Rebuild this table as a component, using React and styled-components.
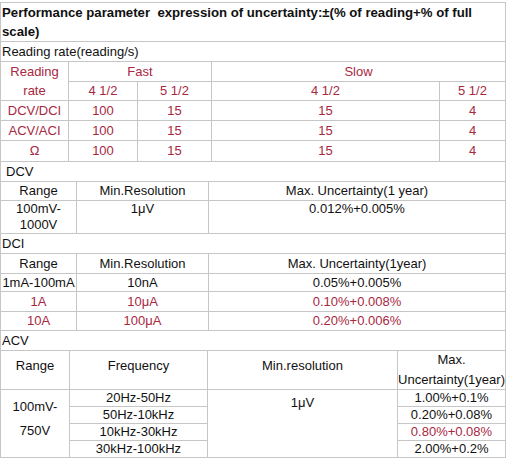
import React from 'react'
import styled, { createGlobalStyle } from 'styled-components'

const GlobalStyle = createGlobalStyle`
    body {
        margin: 0;
        background: #fff;
        font-family: "Liberation Sans", Arial, sans-serif;
        font-size: 13px;
        color: #111;
    }
`

const LINE = '#c6c6c6'
const RED = '#a8283f'

const rates = [
    ['DCV/DCI', '100', '15', '15', '4'],
    ['ACV/ACI', '100', '15', '15', '4'],
    ['Ω', '100', '15', '15', '4'],
]

const dci = [
    { range: '1mA-100mA', res: '10nA', unc: '0.05%+0.005%', red: false, h: 17 },
    { range: '1A', res: '10μA', unc: '0.10%+0.008%', red: true, h: 19 },
    { range: '10A', res: '100μA', unc: '0.20%+0.006%', red: true, h: 18 },
]

const acv = [
    ['20Hz-50Hz', '1.00%+0.1%', false],
    ['50Hz-10kHz', '0.20%+0.08%', false],
    ['10kHz-30kHz', '0.80%+0.08%', true],
    ['30kHz-100kHz', '2.00%+0.2%', false],
]

const App = () => {
    return (
        <>
            <GlobalStyle />
            <Page>
                <Sheet>
                    <Caption>
                        Performance parameter&nbsp; expression of uncertainty:±(% of reading+% of full<br />scale)
                    </Caption>
                    <Label>Reading rate(reading/s)</Label>
                    <Grid $cols="67px 68px 73px 227px 65px" $rows="19px 18px 19px 19px 20px">
                        <Cell $red $span="1 / 3" $lh={19}>Reading<br />rate</Cell>
                        <Cell $red $col="2 / 4">Fast</Cell>
                        <Cell $red $col="4 / 6">Slow</Cell>
                        <Cell $red>4 1/2</Cell>
                        <Cell $red>5 1/2</Cell>
                        <Cell $red>4 1/2</Cell>
                        <Cell $red>5 1/2</Cell>
                        {rates.map(r => r.map((v, i) => <Cell $red key={r[0] + i}>{v}</Cell>))}
                    </Grid>

                    <Label $pad={5}>DCV</Label>
                    <Grid $cols="75px 131px 296px" $rows="18px 32px">
                        <Cell>Range</Cell>
                        <Cell>Min.Resolution</Cell>
                        <Cell>Max. Uncertainty(1 year)</Cell>
                        <Cell $top $lh={16}>100mV-<br />1000V</Cell>
                        <Cell $top $lh={16}>1μV</Cell>
                        <Cell $top $lh={16}>0.012%+0.005%</Cell>
                    </Grid>

                    <Label>DCI</Label>
                    <Grid $cols="75px 131px 296px" $rows={'19px ' + dci.map(d => d.h + 'px').join(' ')}>
                        <Cell>Range</Cell>
                        <Cell>Min.Resolution</Cell>
                        <Cell>Max. Uncertainty(1year)</Cell>
                        {dci.map(d => (
                            <React.Fragment key={d.range}>
                                <Cell $red={d.red}>{d.range}</Cell>
                                <Cell $red={d.red}>{d.res}</Cell>
                                <Cell $red={d.red}>{d.unc}</Cell>
                            </React.Fragment>
                        ))}
                    </Grid>

                    <Label>ACV</Label>
                    <Grid $cols="68px 137px 189px 107px" $rows="38px 16px 16px 16px 16px">
                        <HeadCell>Range</HeadCell>
                        <HeadCell>Frequency</HeadCell>
                        <HeadCell>Min.resolution</HeadCell>
                        <Cell $lh={20}>Max.<br />Uncertainty(1year)</Cell>
                        <Cell $span="2 / 6" $lh={24} $padB={10}>100mV-<br />750V</Cell>
                        <Cell>{acv[0][0]}</Cell>
                        <Cell $span="2 / 6" $col="3" $top $padT={5}>1μV</Cell>
                        <Cell $col="4">{acv[0][1]}</Cell>
                        {acv.slice(1).map(([f, u, red]) => (
                            <React.Fragment key={f}>
                                <Cell $col="2">{f}</Cell>
                                <Cell $col="4" $red={red}>{u}</Cell>
                            </React.Fragment>
                        ))}
                    </Grid>
                </Sheet>
            </Page>
        </>
    )
}

export default App;

const Page = styled.div`
    padding-top: 2px;
`

const Sheet = styled.div`
    box-sizing: border-box;
    width: 506px;
    display: flex;
    flex-direction: column;
    gap: 1px;
    background: ${LINE};
    border: 1px solid ${LINE};
`

const Caption = styled.div`
    background: #fff;
    height: 38px;
    padding: 0 1px;
    font-weight: bold;
    font-size: 13.2px;
    line-height: 19px;
    color: #111;
`

const Label = styled.div`
    background: #fff;
    height: 19px;
    line-height: 19px;
    padding-left: ${p => p.$pad || 1}px;
`

const Grid = styled.div`
    display: grid;
    gap: 1px;
    grid-template-columns: ${p => p.$cols};
    grid-template-rows: ${p => p.$rows};
`

const Cell = styled.div`
    background: #fff;
    display: flex;
    align-items: ${p => (p.$top ? 'flex-start' : 'center')};
    justify-content: center;
    text-align: center;
    white-space: nowrap;
    line-height: ${p => p.$lh || 16}px;
    padding-top: ${p => p.$padT || 0}px;
    padding-bottom: ${p => p.$padB || 0}px;
    color: ${p => (p.$red ? RED : '#111')};
    ${p => p.$span && `grid-row: ${p.$span};`}
    ${p => p.$col && `grid-column: ${p.$col};`}
`

const HeadCell = styled(Cell)`
    padding-bottom: 9px;
`
